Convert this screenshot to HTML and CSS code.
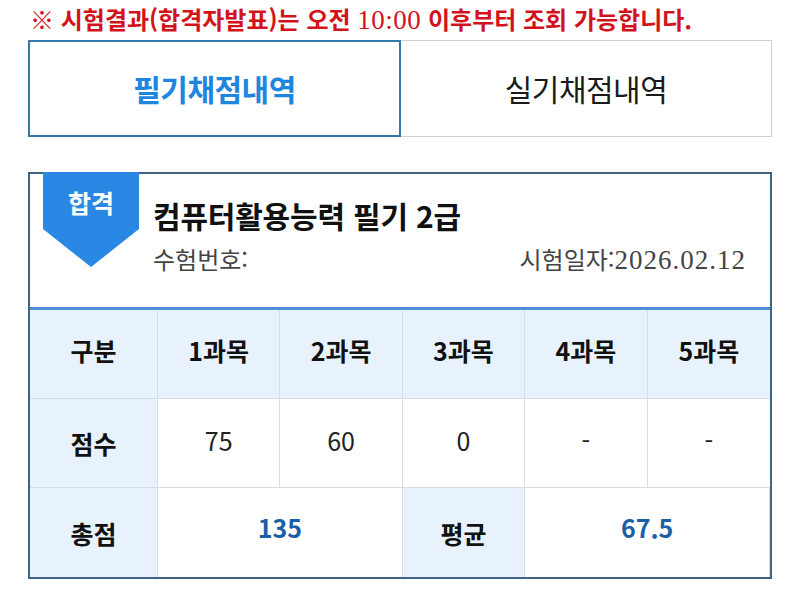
FILE: index.html
```html
<!DOCTYPE html>
<html lang="ko">
<head>
<meta charset="utf-8">
<title>채점내역</title>
<link rel="stylesheet" href="styles.css">
</head>
<body>
<p class="notice">※ 시험결과(합격자발표)는 오전 <span class="num">10:00</span> 이후부터 조회 가능합니다.</p>
<div class="tabs">
  <div class="tab active">필기채점내역</div>
  <div class="tab">실기채점내역</div>
</div>
<div class="card">
  <div class="card-head">
    <div class="badge">합격</div>
    <div class="title">컴퓨터활용능력 필기 2급</div>
    <div class="meta">
      <span>수험번호:</span>
      <span>시험일자:<span class="num date">2026.02.12</span></span>
    </div>
  </div>
  <div class="score-table">
    <div class="cell th">구분</div>
    <div class="cell th">1과목</div>
    <div class="cell th">2과목</div>
    <div class="cell th">3과목</div>
    <div class="cell th">4과목</div>
    <div class="cell th">5과목</div>
    <div class="cell th side">점수</div>
    <div class="cell val">75</div>
    <div class="cell val">60</div>
    <div class="cell val">0</div>
    <div class="cell val">-</div>
    <div class="cell val">-</div>
    <div class="cell th side">총점</div>
    <div class="cell total span2">135</div>
    <div class="cell th side">평균</div>
    <div class="cell total span2">67.5</div>
  </div>
</div>
</body>
</html>
```
FILE: styles.css
```css
* { box-sizing: border-box; }
body {
  margin: 0;
  background: #fff;
  font-family: "Noto Sans CJK KR", "Noto Sans", sans-serif;
  color: #111;
}
.notice {
  margin: 0;
  padding: 3px 0 0 30px;
  height: 40px;
  color: #d3121b;
  font-size: 24px;
  font-weight: 700;
  line-height: 32px;
  letter-spacing: 0;
}
.num {
  font-family: "Liberation Serif", serif;
  font-weight: 400;
  font-size: 27px;
  letter-spacing: 0.5px;
}
.tabs {
  margin: 0 28px;
  display: grid;
  grid-template-columns: 373px 1fr;
  height: 97px;
}
.tab {
  display: flex;
  align-items: center;
  justify-content: center;
  font-size: 30px;
  color: #1a1a1a;
  border: 1px solid #cfcfcf;
  border-left: none;
  letter-spacing: -0.5px;
  padding-bottom: 2px;
}
.tab.active {
  border: 2px solid #3279a8;
  color: #1f86e0;
  font-weight: 700;
}
.card {
  margin: 35px 28px 0;
  border: 2px solid #3e6482;
}
.card-head {
  position: relative;
  height: 133px;
  padding: 20px 24px 0 123px;
}
.badge {
  position: absolute;
  left: 13px;
  top: -2px;
  width: 96px;
  height: 95px;
  background: #2a87e4;
  clip-path: polygon(0 0, 100% 0, 100% 60%, 50% 100%, 0 60%);
  color: #fff;
  font-size: 25px;
  font-weight: 700;
  text-align: center;
  line-height: 60px;
}
.title {
  font-size: 30px;
  font-weight: 700;
  line-height: 42px;
  letter-spacing: -0.2px;
}
.meta {
  display: flex;
  justify-content: space-between;
  margin-top: 6px;
  font-size: 24px;
  color: #444;
  line-height: 34px;
}
.date {
  font-size: 27px;
  letter-spacing: 1px;
}
.score-table {
  border-top: 3px solid #4a8fd8;
  display: grid;
  grid-template-columns: 128px repeat(5, 1fr);
  grid-auto-rows: 89px;
}
.cell {
  display: flex;
  align-items: center;
  justify-content: center;
  border-right: 1px solid #d6dde4;
  border-bottom: 1px solid #d6dde4;
  font-size: 25px;
}
.cell:nth-child(6n) { border-right: none; }
.cell:nth-last-child(-n+4) { border-bottom: none; }
.th {
  background: #e8f2fc;
  font-weight: 700;
  color: #111;
  padding-bottom: 8px;
}
.side { padding-bottom: 0; }
.val {
  font-size: 25px;
  color: #222;
  padding-bottom: 6px;
}
.total {
  color: #1d5ea8;
  font-weight: 700;
  font-size: 25px;
  padding-bottom: 12px;
}
.span2 { grid-column: span 2; }
```
